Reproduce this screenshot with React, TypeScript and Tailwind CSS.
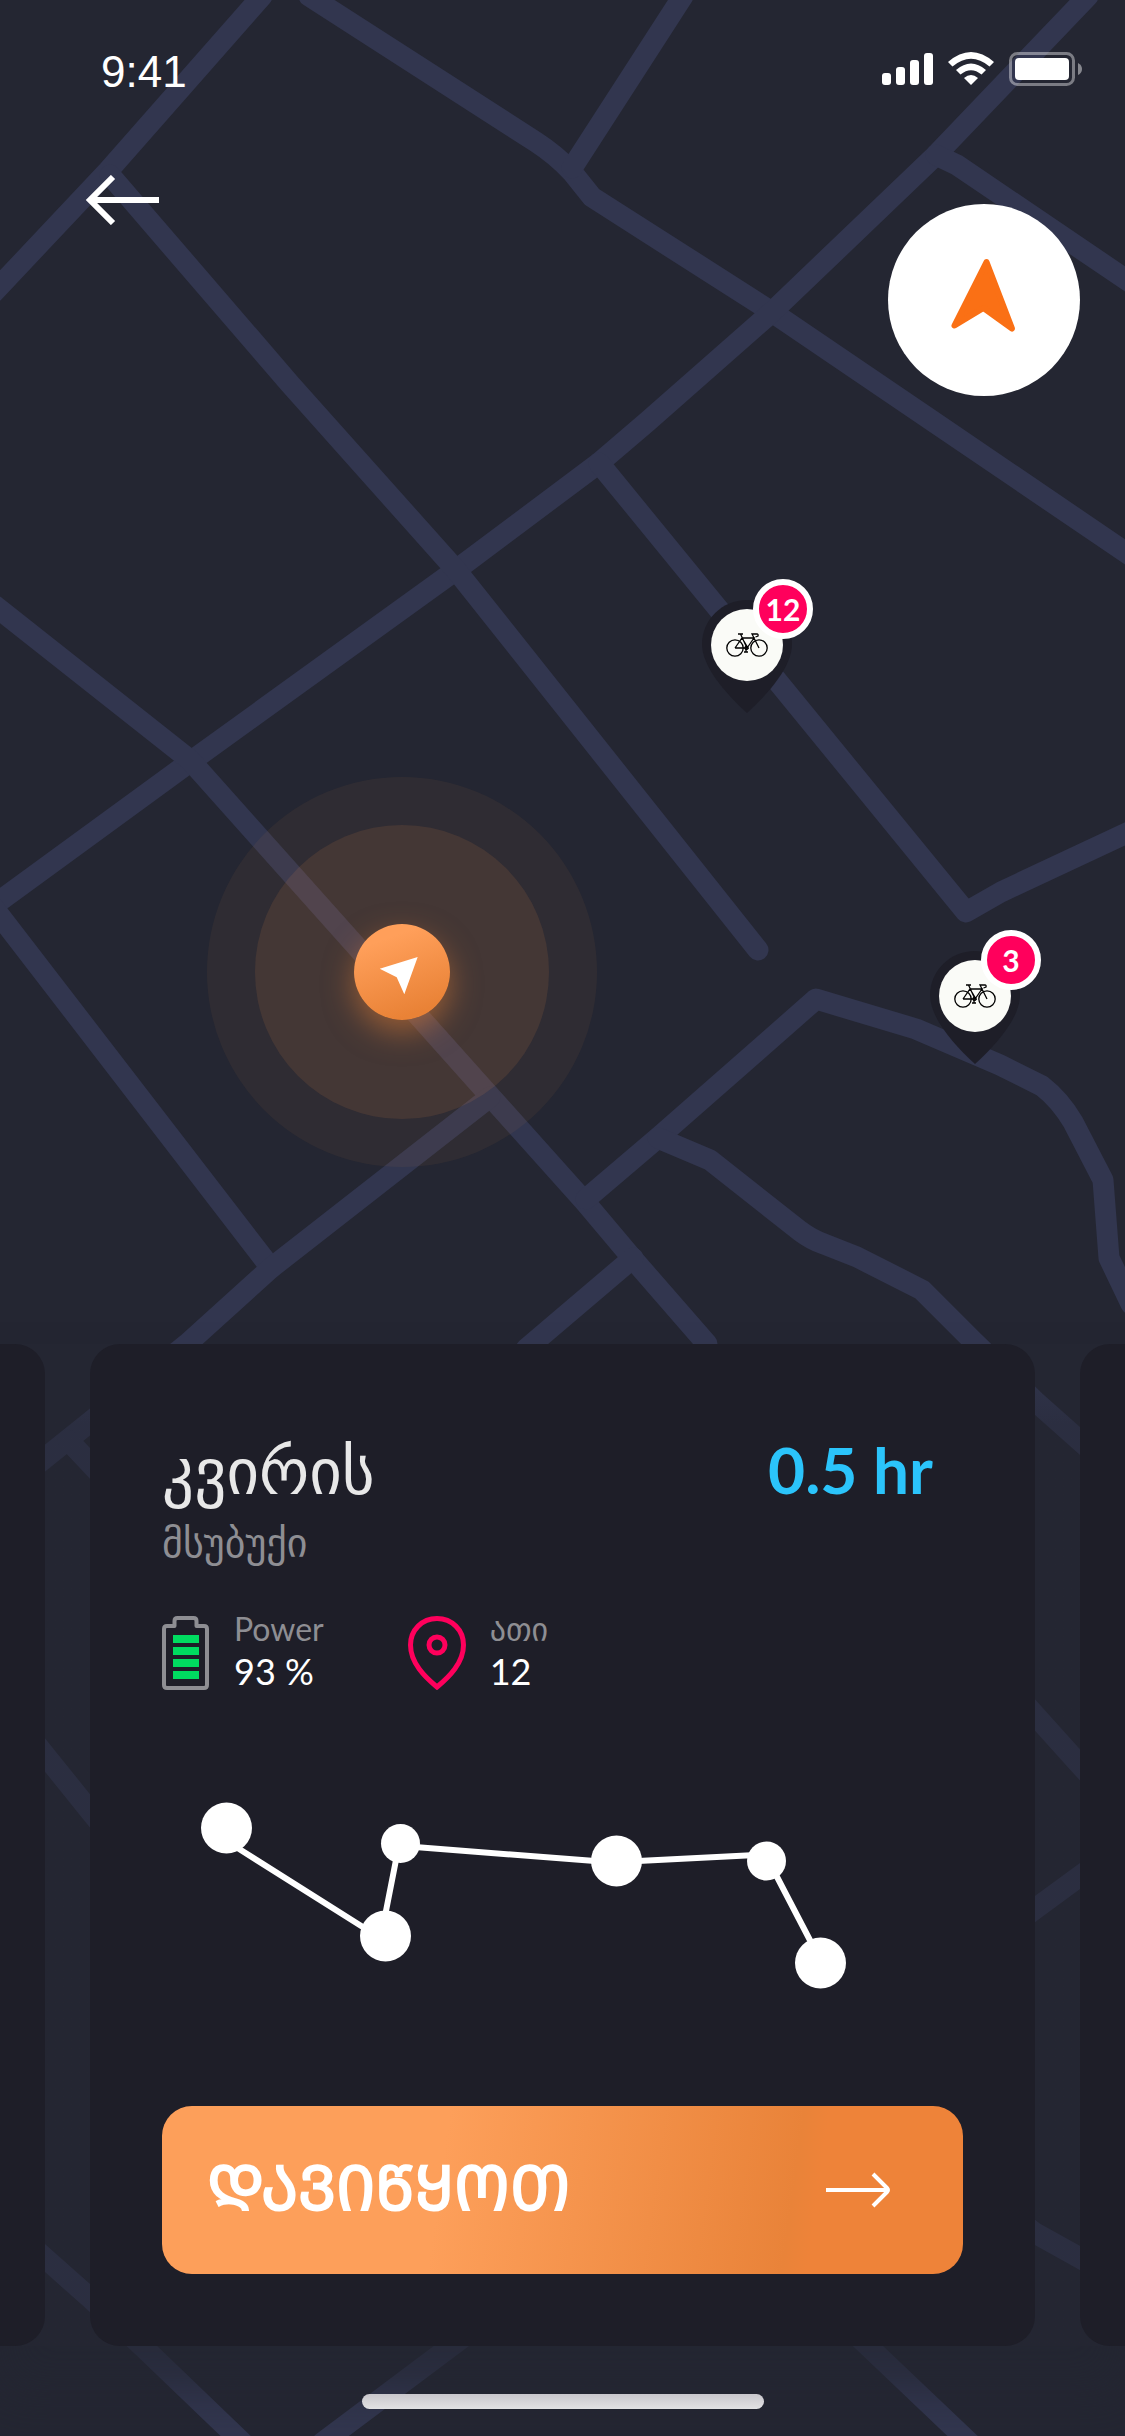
import React from "react";

const roads = [
  "M262 -4 L108 171 L-6 292",
  "M309 -4 L536 142 Q556 155 572 172 L592 197 L772 312 L931 420 L1131 556",
  "M683 -4 L572 168",
  "M1088 -4 L936 155 L772 312 L647 422 L599 463 L456 570 L190 762 L-10 908",
  "M936 155 L957 165 L1131 283",
  "M110 175 L290 384 L423 533 L456 570 L758 950",
  "M599 463 L966 912 L1001 892 L1131 831",
  "M-6 605 L190 760 L490 1096 L585 1202 L633 1259 L707 1344",
  "M-10 903 L271 1268",
  "M490 1097 L271 1268 L187 1344 L90 1422 L-6 1499",
  "M633 1258 L526 1349",
  "M586 1199 L660 1136 L816 999 L916 1029 L1000 1065 L1042 1086 Q1060 1100 1073 1122 L1103 1180 L1109 1258 L1131 1304",
  "M658 1138 L710 1160 L800 1231 Q812 1240 824 1244 L857 1257 L922 1290 L972 1340 L1035 1401 L1080 1441 L1131 1486",
  "M68 1440 L100 1474",
  "M0 1699 L45 1755 L90 1811 L120 1848",
  "M0 2218 L45 2258 L90 2298 L143 2347 L244 2444",
  "M1000 1676 L1035 1715 L1080 1765 L1131 1820",
  "M1000 1935 L1035 1909 L1080 1876 L1131 1839",
  "M1000 2206 L1035 2233 L1080 2258 L1131 2287",
  "M470 2332 L450 2347 L322 2443",
  "M850 2329 L869 2347 L970 2443",
];

function CityMap() {
  return (
    <svg
      className="absolute inset-0 h-full w-full"
      viewBox="0 0 1125 2436"
      preserveAspectRatio="xMidYMid slice"
      fill="none"
      stroke="#32364f"
      strokeWidth="21"
      strokeLinecap="round"
      strokeLinejoin="round"
      aria-hidden="true"
    >
      {roads.map((d) => (
        <path key={d} d={d} />
      ))}
    </svg>
  );
}

function Bicycle() {
  return (
    <svg className="h-[24px] w-[42px]" viewBox="0 0 42 24" fill="none" stroke="#000" strokeWidth="1.3" aria-hidden="true">
      <circle cx="9" cy="15" r="8.2" />
      <circle cx="33" cy="15" r="8.2" />
      <path d="M9 15 L16 5 L22 15 L9 15 M16.500 5 H28 L21 15 M14.500 1 L21 15 M12 1 H17 M33 15 L26 1 H31 Q32.500 1 32 3 L29.500 4 M20 15 V19 M18 19 H22" />
      <circle cx="20.500" cy="15" r="1.500" />
    </svg>
  );
}

function BikePin({ count, place }: { count: number; place: string }) {
  return (
    <button type="button" aria-label={`${count} bikes`} className={`absolute h-[114px] w-[90px] ${place}`}>
      <svg className="absolute inset-0 h-full w-full" viewBox="0 0 90 114" aria-hidden="true">
        <path fill="#1e1e28" d="M45 0 C70 0 90 20 90 44 C90 66 68 92 45 113 C22 92 0 66 0 44 C0 20 20 0 45 0Z" />
      </svg>
      <span className="absolute top-[9px] left-[9px] flex size-[72px] items-center justify-center rounded-full bg-[#fafbf7]">
        <Bicycle />
      </span>
      <span className="absolute -top-[21px] left-[51px] flex size-[60px] items-center justify-center rounded-full border-[6px] border-white bg-[#ff005c] text-[30px] leading-none font-bold text-white">
        {count}
      </span>
    </button>
  );
}

function UserLocation() {
  return (
    <div className="absolute top-[777px] left-[207px] flex size-[390px] items-center justify-center rounded-full bg-[#f3914a]/6">
      <div className="flex size-[294px] items-center justify-center rounded-full bg-[#f3914a]/11">
        <div className="flex size-[96px] items-center justify-center rounded-full bg-[linear-gradient(160deg,#ff9f5a_20%,#e98236_85%)] shadow-[0_12px_30px_rgba(233,130,54,0.5)]">
          <svg className="size-[48px]" viewBox="-24 -24 48 48" aria-hidden="true">
            <path fill="#fff" d="M15.700 -15 L-22.300 -3.300 L-5.300 5.300 L2.300 22.300Z" />
          </svg>
        </div>
      </div>
    </div>
  );
}

function StatusIcons() {
  return (
    <svg className="h-[48px] w-[201px]" viewBox="882 45 201 48" fill="#fff" aria-hidden="true">
      <rect x="882" y="73" width="9" height="12" rx="3" />
      <rect x="896" y="67" width="9" height="18" rx="3" />
      <rect x="910" y="60" width="9" height="25" rx="3" />
      <rect x="924" y="53" width="9" height="32" rx="3" />
      <path d="M948 62 Q971 42 994 62 L989.500 66.500 Q971 51 952.500 66.500Z" />
      <path d="M956 70 Q971 57 986 70 L981.500 74.500 Q971 66 960.500 74.500Z" />
      <path d="M964 78 Q971 72 978 78 L971 85Z" />
      <rect x="1010.500" y="53.500" width="63" height="31" rx="7" fill="none" stroke="#fff" strokeWidth="3" opacity="0.4" />
      <rect x="1015" y="58" width="54" height="22" rx="4" />
      <path opacity="0.45" d="M1078 63 Q1082 65 1082 69 Q1082 73 1078 75Z" />
    </svg>
  );
}

function BatteryIcon() {
  return (
    <svg className="h-[74px] w-[48px]" viewBox="0 0 48 74" fill="none" aria-hidden="true">
      <path
        stroke="#8e8e93"
        strokeWidth="4"
        strokeLinejoin="round"
        d="M5 10 H12.500 V5 Q12.500 2 15.500 2 H31.500 Q34.500 2 34.500 5 V10 H42 Q45 10 45 13 V69 Q45 72 42 72 H5 Q2 72 2 69 V13 Q2 10 5 10Z"
      />
      <path fill="#00dc60" d="M11 19h26v8H11zM11 31h26v8H11zM11 43h26v8H11zM11 55h26v8H11z" />
    </svg>
  );
}

function PlaceIcon() {
  return (
    <svg className="h-[74px] w-[58px]" viewBox="0 0 58 74" fill="none" stroke="#ff005c" strokeWidth="5" aria-hidden="true">
      <path d="M29 2.500 C44 2.500 55.500 14 55.500 29 C55.500 47 41 61 29 71 C17 61 2.500 47 2.500 29 C2.500 14 14 2.500 29 2.500Z" />
      <circle cx="29" cy="29" r="8" />
    </svg>
  );
}

function Stat({ icon, label, value }: { icon: React.ReactNode; label: string; value: string }) {
  return (
    <div className="flex items-center gap-[24px]">
      {icon}
      <dl>
        <dt className="text-[32px] leading-[36px] text-[#8e8e93]">{label}</dt>
        <dd className="text-[36px] leading-[48px] text-white">{value}</dd>
      </dl>
    </div>
  );
}

function RouteSketch() {
  return (
    <svg className="mt-[105px] ml-[39px] h-[192px] w-[648px]" viewBox="201 1800 648 192" role="img" aria-label="Route">
      <path
        stroke="#fff"
        strokeWidth="6"
        d="M236 1847 L366 1929 M396 1860 L385 1916 M415 1847 L595 1861 M638 1861 L756 1855 M775 1873 L813 1946"
      />
      <g fill="#fff">
        <circle cx="226.500" cy="1828" r="25.500" />
        <circle cx="385.500" cy="1936" r="25.500" />
        <circle cx="400.500" cy="1843.500" r="19.500" />
        <circle cx="616.500" cy="1861" r="25.500" />
        <circle cx="766.500" cy="1861" r="19.500" />
        <circle cx="820.500" cy="1963" r="25.500" />
      </g>
    </svg>
  );
}

export default function App() {
  return (
    <div className="relative flex min-h-screen flex-col overflow-hidden bg-[#242632] font-['Lato','DejaVu_Sans',sans-serif]">
      <CityMap />
      <UserLocation />
      <BikePin count={12} place="top-[600px] left-[702px]" />
      <BikePin count={3} place="top-[951px] left-[930px]" />

      <header className="relative">
        <div className="flex items-start justify-between pt-[45px] pr-[42px] pl-[101px]">
          <time className="font-['Liberation_Sans',sans-serif] text-[44px] leading-[54px] text-white">9:41</time>
          <StatusIcons />
        </div>
        <div className="flex items-start justify-between pt-[76px] pr-[45px] pl-[84px]">
          <button type="button" aria-label="Back">
            <svg className="h-[50px] w-[76px]" viewBox="0 0 76 50" fill="none" stroke="#fff" strokeWidth="6" aria-hidden="true">
              <path d="M5 25 H75 M29 2 L6 25 L29 48" />
            </svg>
          </button>
          <button
            type="button"
            aria-label="Centre on my location"
            className="mt-[29px] flex size-[192px] items-center justify-center rounded-full bg-white"
          >
            <svg className="size-[192px]" viewBox="888 204 192 192" aria-hidden="true">
              <path
                fill="#fa7015"
                stroke="#fa7015"
                strokeWidth="6"
                strokeLinejoin="round"
                d="M986.500 262 L954.500 325.500 L983.500 308 L1012 328.500Z"
              />
            </svg>
          </button>
        </div>
      </header>

      <main className="relative mt-auto flex gap-[45px] bg-linear-to-b from-[#242632]/0 to-[#242632]/50 to-[80px] shadow-[0_45px_45px_rgba(36,38,50,0.7)]">
        <div className="w-[45px] shrink-0 rounded-r-[30px] bg-[#1e1e28]" />
        <section className="min-w-0 flex-1 rounded-[30px] bg-[#1e1e28] px-[72px] pt-[84px] pb-[72px]">
          <div className="flex items-center justify-between pr-[30px]">
            <h1 className="text-[63px] leading-[84px] text-[#e8e8e8]">კვირის</h1>
            <p className="text-[64px] leading-[84px] font-bold text-[#2bc4fb]">0.5 hr</p>
          </div>
          <p className="mt-[6px] text-[40px] leading-[48px] text-[#8e8e93]">მსუბუქი</p>
          <div className="mt-[45px] flex gap-[84px]">
            <Stat icon={<BatteryIcon />} label="Power" value="93 %" />
            <Stat icon={<PlaceIcon />} label="ათი" value="12" />
          </div>
          <RouteSketch />
          <button
            type="button"
            className="mt-[114px] flex h-[168px] w-full items-center justify-between rounded-[30px] bg-[linear-gradient(98deg,#fd9f5a_35%,#e98339_78%,#ee8339_81%)] pr-[72px] pl-[45px] text-[62px] leading-[72px] font-black text-white"
          >
            <span className="pb-2">ᲓᲐᲕᲘᲬᲧᲝᲗ</span>
            <svg className="h-[40px] w-[66px]" viewBox="0 0 66 40" fill="none" stroke="#fff" strokeWidth="4" aria-hidden="true">
              <path d="M1 20 H62 M48 4 L62 18 Q64 20 62 22 L48 36" />
            </svg>
          </button>
        </section>
        <div className="w-[45px] shrink-0 rounded-l-[30px] bg-[#1e1e28]" />
      </main>

      <footer className="relative flex justify-center pt-[48px] pb-[27px]">
        <div className="h-[15px] w-[402px] rounded-full bg-linear-to-b from-[#c9c7cc] to-[#e2e2e4]" />
      </footer>
    </div>
  );
}
